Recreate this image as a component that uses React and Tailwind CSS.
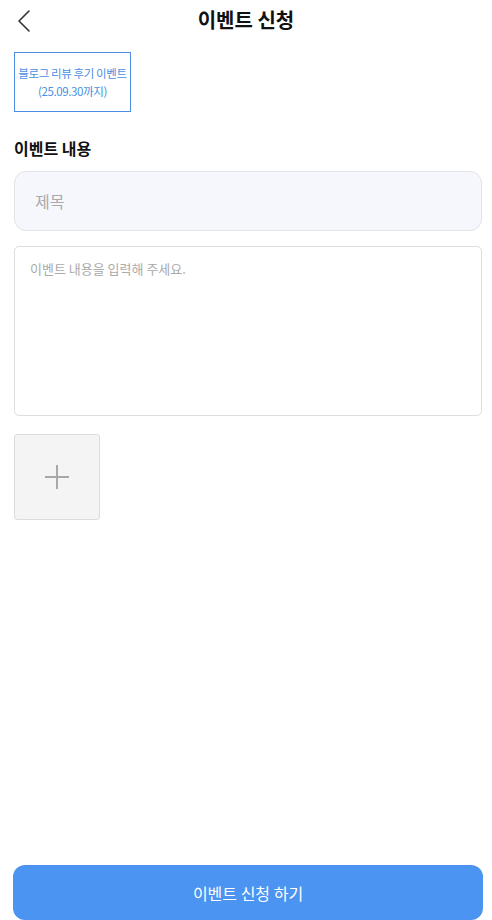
import React from 'react';

const font = { fontFamily: '"Noto Sans CJK KR", "Noto Sans", sans-serif' };

function App() {
  return (
    <div className="flex h-[920px] w-full flex-col bg-white text-[#111]" style={font}>
      {/* Header */}
      <header className="relative flex h-[40px] items-center justify-center">
        <button className="absolute left-[16px] top-[9px] p-0">
          <svg width="16" height="24" viewBox="0 0 16 24" fill="none">
            <path d="M13 2L3 12L13 22" stroke="#333" strokeWidth="1.6" strokeLinecap="round" strokeLinejoin="round" />
          </svg>
        </button>
        <h1 className="text-[20px] font-bold leading-none">이벤트 신청</h1>
      </header>

      <main className="flex flex-col pl-[14px] pr-[10px]">
        {/* Event badge */}
        <div className="mt-[12px] flex h-[60px] w-[117px] flex-col items-center justify-center whitespace-nowrap border border-[#4a8fe3] text-[11.5px] leading-[18px] tracking-[-0.4px] text-[#4a8fe3]">
          <span>블로그 리뷰 후기 이벤트</span>
          <span>(25.09.30까지)</span>
        </div>

        <h2 className="mt-[24px] text-[16px] font-bold leading-[24px]">이벤트 내용</h2>

        <input
          placeholder="제목"
          className="mt-[11px] h-[60px] w-full rounded-[12px] border border-[#e2e3e8] bg-[#f6f7fc] px-[20px] text-[16px] outline-none placeholder:text-[#aaa]"
        />

        <textarea
          placeholder="이벤트 내용을 입력해 주세요."
          className="mt-[15px] h-[170px] w-full resize-none rounded-[5px] border border-[#dedede] px-[15px] py-[12px] text-[13px] leading-[20px] outline-none placeholder:text-[#aaa]"
        />

        <button className="mt-[18px] flex h-[86px] w-[86px] items-center justify-center rounded-[3px] border border-[#dcdcdc] bg-[#f4f4f4]">
          <svg width="26" height="26" viewBox="0 0 26 26">
            <path d="M13 1V25M1 13H25" stroke="#a8a8a8" strokeWidth="2" />
          </svg>
        </button>
      </main>

      <div className="flex-1" />

      <div className="pl-[13px] pr-[9px]">
        <button className="flex h-[55px] w-full items-center justify-center rounded-[12px] bg-[#4b94f2] text-[16px] text-white">
          이벤트 신청 하기
        </button>
      </div>
    </div>
  );
}

export default App;
